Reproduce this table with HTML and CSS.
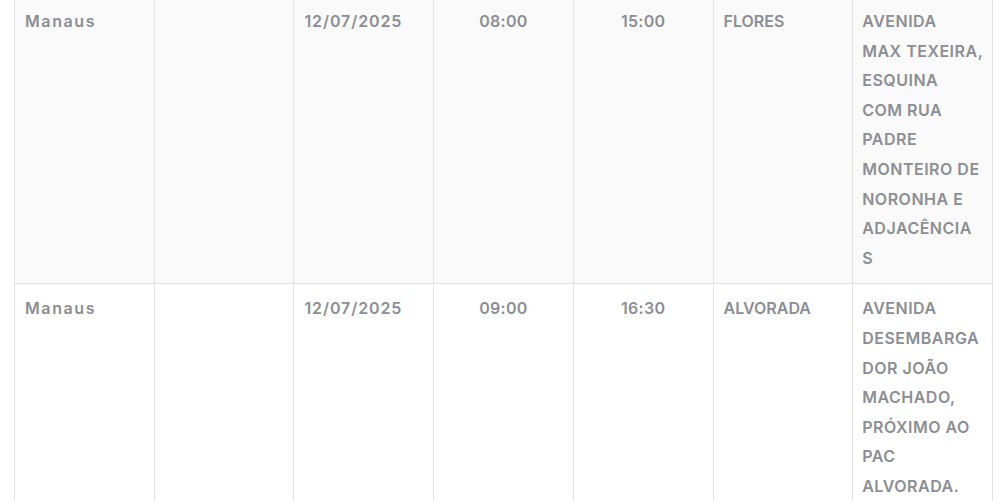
FILE: index.html
```html
<!DOCTYPE html>
<html lang="pt-BR">
<head>
<meta charset="utf-8">
<link rel="stylesheet" href="styles.css">
</head>
<body>
<div class="wrap">
  <table class="grid">
    <tbody>
      <tr class="odd">
        <td class="city">Manaus</td>
        <td></td>
        <td class="date">12/07/2025</td>
        <td class="time">08:00</td>
        <td class="time">15:00</td>
        <td class="up">FLORES</td>
        <td class="up addr">AVENIDA<br>MAX TEXEIRA,<br>ESQUINA<br>COM RUA<br>PADRE<br>MONTEIRO DE<br>NORONHA E<br>ADJACÊNCIA<br>S</td>
      </tr>
      <tr>
        <td class="city">Manaus</td>
        <td></td>
        <td class="date">12/07/2025</td>
        <td class="time">09:00</td>
        <td class="time">16:30</td>
        <td class="up">ALVORADA</td>
        <td class="up addr">AVENIDA<br>DESEMBARGA<br>DOR JOÃO<br>MACHADO,<br>PRÓXIMO AO<br>PAC<br>ALVORADA.</td>
      </tr>
    </tbody>
  </table>
</div>
</body>
</html>
```

FILE: styles.css
```css
html, body {
  margin: 0;
  padding: 0;
  background: #ffffff;
}
.wrap {
  padding: 0 15px 0 14px;
  overflow: hidden;
  height: 501px;
}
.grid {
  width: 979px;
  margin-top: -4px;
  border-collapse: collapse;
  table-layout: fixed;
  font-family: "Inter", "Open Sans", "Liberation Sans", sans-serif;
  font-size: 16px;
  font-weight: 600;
  color: #8b8e94;
}
.grid td {
  border: 1px solid #e2e2e2;
  padding: 10px 10px;
  line-height: 29.6px;
  vertical-align: top;
  text-align: left;
}
.grid tr.odd td {
  background: #fafafa;
}
.grid td.city {
  letter-spacing: 1.6px;
}
.grid td.date {
  letter-spacing: 0.9px;
}
.grid td.time {
  text-align: center;
  letter-spacing: 0.3px;
}
.grid td.addr {
  white-space: nowrap;
  letter-spacing: 0.5px;
  padding-left: 9px;
}
```
